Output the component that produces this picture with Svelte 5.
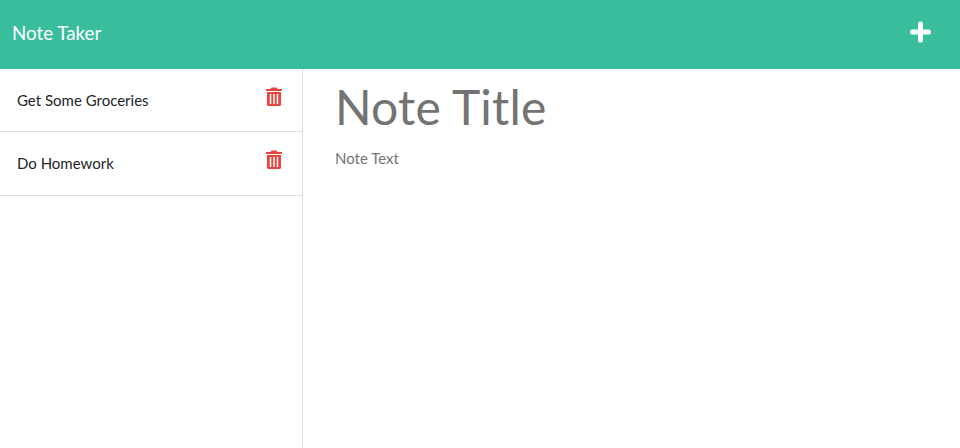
<script lang="ts">
	let notes = [{ title: 'Get Some Groceries' }, { title: 'Do Homework' }];
</script>

<nav class="navbar">
	<span class="brand">Note Taker</span>
	<button class="new-note" aria-label="New note">
		<svg viewBox="0 0 22 22" width="22" height="22">
			<path d="M10.500 3v16M2.500 11h16" stroke="#fff" stroke-width="5" stroke-linecap="round" fill="none" />
		</svg>
	</button>
</nav>

<div class="main">
	<aside class="sidebar">
		<ul class="list">
			{#each notes as note}
				<li class="item">
					<span>{note.title}</span>
					<svg class="trash" viewBox="0 0 16 19" width="16" height="19">
						<path
							fill="#e8453f"
							fill-rule="evenodd"
							d="M5.500 0.500h5l1 1.500H16v2H0V2h4.500zM1 5h14v12.500a1.500 1.500 0 0 1-1.500 1.500h-11A1.500 1.500 0 0 1 1 17.500zM3.800 7v10h1.500V7zM7.250 7v10h1.500V7zM10.700 7v10h1.500V7z"
						/>
					</svg>
				</li>
			{/each}
		</ul>
	</aside>
	<section class="editor">
		<h1 class="note-title">Note Title</h1>
		<p class="note-text">Note Text</p>
	</section>
</div>

<style>
	:global(body) {
		font-family: Lato, 'Open Sans', sans-serif;
		background: #fff;
	}
	.navbar {
		height: 68.500px;
		background: #3abd9c;
		display: flex;
		align-items: center;
		justify-content: space-between;
		padding: 0 28px 0 12px;
		box-sizing: border-box;
	}
	.brand {
		color: #fff;
		font-size: 18.750px;
		line-height: 1;
		margin-top: -1px;
	}
	.new-note {
		background: none;
		border: 0;
		padding: 0;
		display: flex;
		margin-top: -5px;
	}
	.main {
		display: flex;
		height: 379.500px;
	}
	.sidebar {
		width: 303px;
		box-sizing: border-box;
		border-right: 1px solid #dcdcdc;
	}
	.list {
		list-style: none;
		margin: 0;
		padding: 0;
	}
	.item {
		display: flex;
		align-items: center;
		justify-content: space-between;
		height: 63.500px;
		box-sizing: border-box;
		padding: 0 20px 0 17px;
		border-bottom: 1px solid #dedede;
		font-size: 15px;
		color: #212529;
	}
	.trash {
		margin-top: -7px;
	}
	.editor {
		flex: 1;
		padding: 0 32px;
	}
	.note-title {
		margin: 6px 0 0;
		font-size: 48px;
		letter-spacing: 0.200px;
		font-weight: 400;
		line-height: 64px;
		color: #737373;
	}
	.note-text {
		margin: 7px 0 0;
		font-size: 15px;
		line-height: 24px;
		color: #757575;
	}
</style>
